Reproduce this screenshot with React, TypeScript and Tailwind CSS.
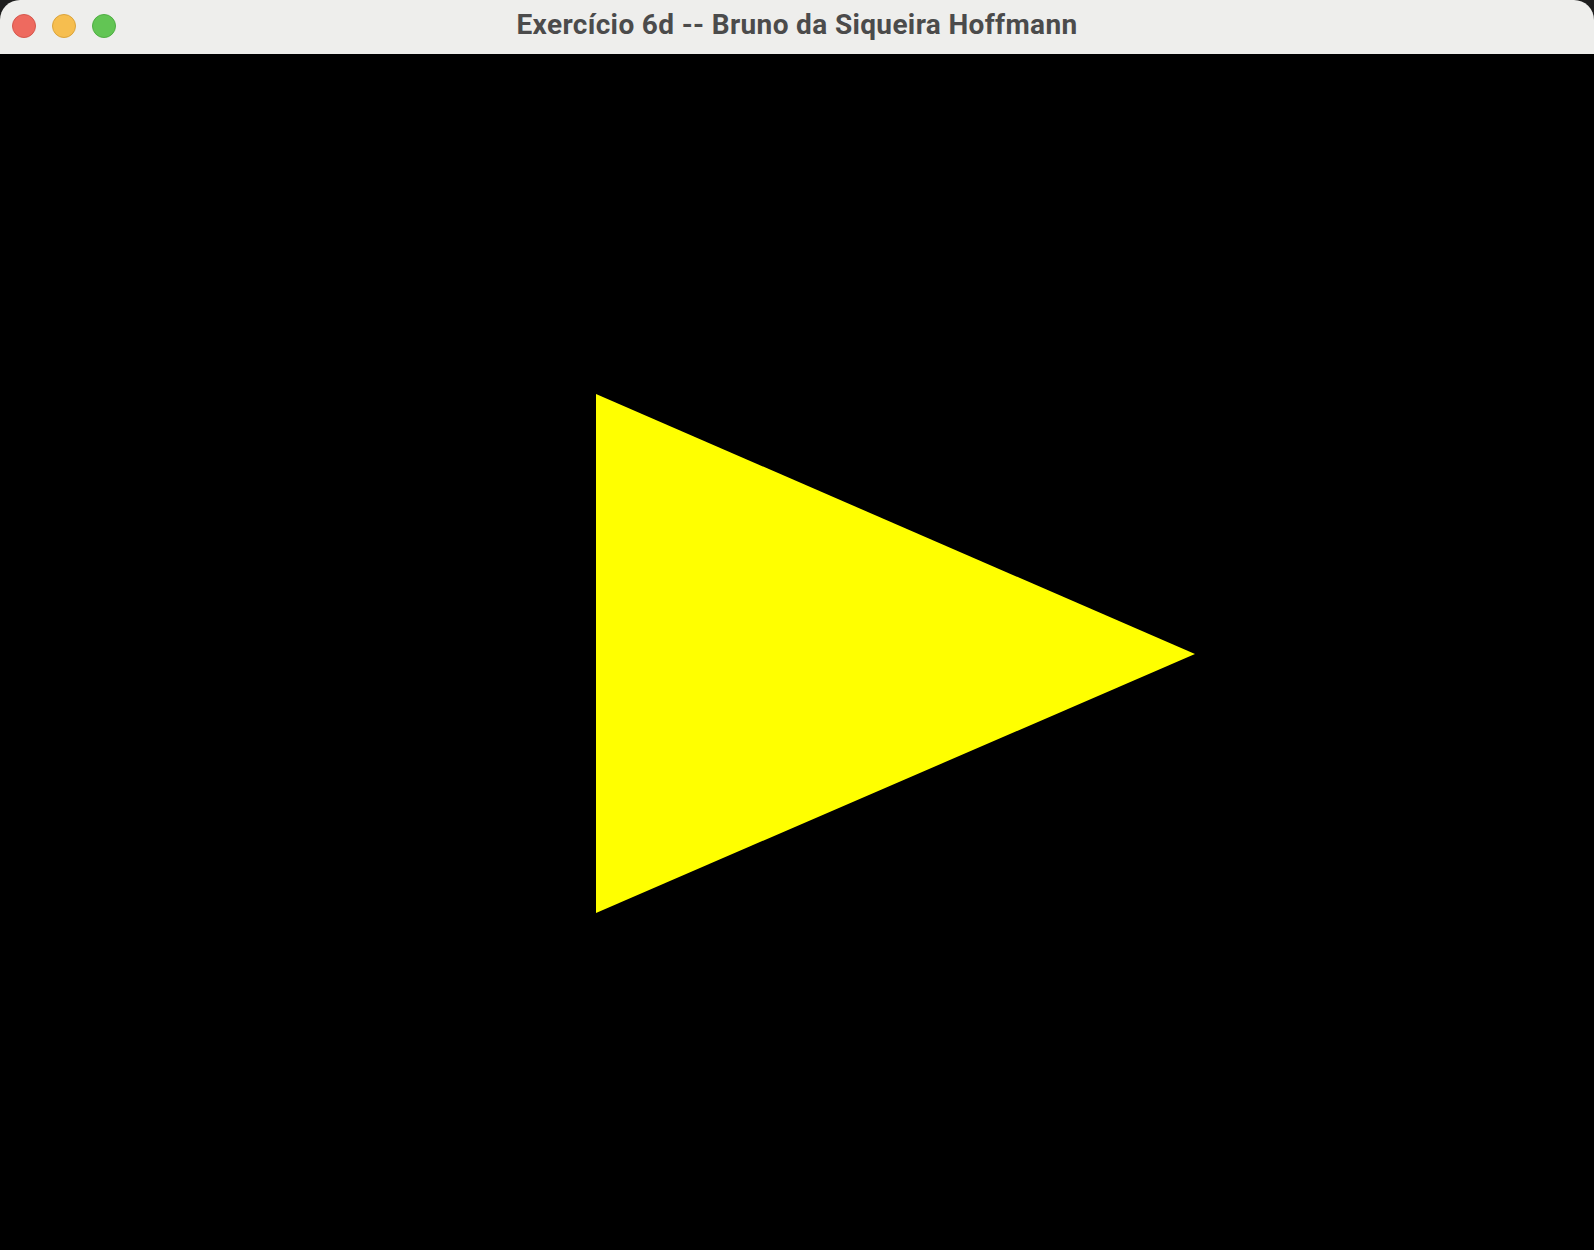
const Light = ({ color, ring }: { color: string; ring: string }) => (
  <div className={`h-6 w-6 rounded-full border ${color} ${ring}`} />
);

export default function App() {
  return (
    <div className="h-[1250px] w-[1594px] bg-[#1e1e1e] flex flex-col overflow-hidden">
      <header className="relative h-[54px] shrink-0 rounded-t-[20px] bg-[#eeeeec] flex items-center justify-center pb-[5px]">
        <div className="absolute left-3 top-[14px] flex gap-4">
          <Light color="bg-[#ee6a5f]" ring="border-[#d6574d]" />
          <Light color="bg-[#f6be4f]" ring="border-[#dba43b]" />
          <Light color="bg-[#62c554]" ring="border-[#4fae43]" />
        </div>
        <h1 className="text-[28px] tracking-[0.35px] font-bold text-[#4b4b4b] font-['Roboto',sans-serif] leading-none">
          Exercício 6d -- Bruno da Siqueira Hoffmann
        </h1>
      </header>
      <main className="flex-1 bg-black">
        <svg width="1594" height="1196" viewBox="0 0 1594 1196" className="block">
          <polygon points="596,340 596,859 1195,600" fill="#ffff00" />
        </svg>
      </main>
    </div>
  );
}
